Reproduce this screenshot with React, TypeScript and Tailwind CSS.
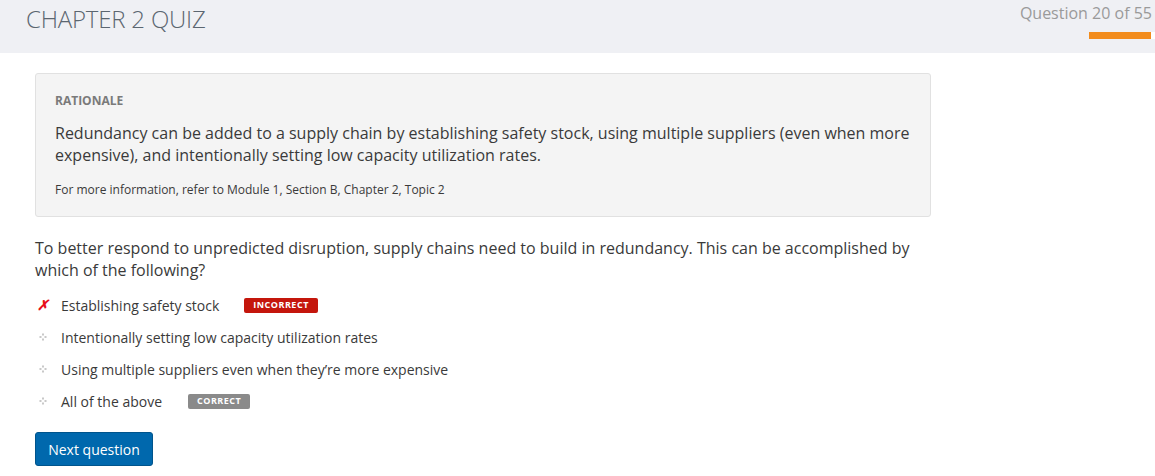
import React from 'react';

const OPTIONS = [
  { text: 'Establishing safety stock', status: 'incorrect' },
  { text: 'Intentionally setting low capacity utilization rates', status: 'none' },
  { text: 'Using multiple suppliers even when they\u2019re more expensive', status: 'none' },
  { text: 'All of the above', status: 'correct' },
];

const Bullet = () => (
  <svg width="8" height="8" viewBox="0 0 8 8" className="text-[#c8c8c8]">
    <rect x="3" y="0.5" width="2" height="2" fill="currentColor" />
    <rect x="0.5" y="3" width="2" height="2" fill="currentColor" />
    <rect x="5.5" y="3" width="2" height="2" fill="currentColor" />
    <rect x="3" y="5.5" width="2" height="2" fill="currentColor" />
  </svg>
);

export default function App() {
  return (
    <div className="w-[1155px] h-[476px] bg-white font-['Open_Sans',sans-serif] overflow-hidden">
      {/* Header */}
      <div className="h-[53px] bg-[#eff0f4] flex justify-between">
        <h1 className="pl-[26px] pt-[2px] text-[24px] font-light text-[#5b6670] leading-[34px] tracking-[-0.2px]">
          CHAPTER 2 QUIZ
        </h1>
        <div className="flex flex-col items-end">
          <div className="pt-[2px] pr-[3px] text-[16px] text-[#9a9a9a] leading-[22px]">Question 20 of 55</div>
          <div className="mt-[8px] w-[66px] h-[7px] bg-white flex">
            <div className="w-[62px] h-full bg-[#f28c1c]" />
          </div>
        </div>
      </div>

      <div className="pl-[35px] pt-[20px] w-[931px]">
        {/* Rationale */}
        <div className="bg-[#f4f4f4] border border-[#e1e1e1] rounded-[3px] px-[19px] pt-[19px] pb-[18px]">
          <div className="text-[12px] font-bold text-[#7a7a7a] leading-[16px]">RATIONALE</div>
          <p className="mt-[13px] text-[16px] text-[#3a3a3a] leading-[22px]">
            Redundancy can be added to a supply chain by establishing safety stock, using multiple suppliers (even when more
            expensive), and intentionally setting low capacity utilization rates.
          </p>
          <p className="mt-[16px] text-[12px] text-[#3a3a3a] leading-[16px]">
            For more information, refer to Module 1, Section B, Chapter 2, Topic 2
          </p>
        </div>

        {/* Question */}
        <p className="mt-[20px] text-[16px] text-[#3a3a3a] leading-[22px]">
          To better respond to unpredicted disruption, supply chains need to build in redundancy. This can be accomplished by
          which of the following?
        </p>

        <ul className="mt-[8px] flex flex-col">
          {OPTIONS.map(opt => (
            <li key={opt.text} className="h-[32px] flex items-center text-[14px] text-[#3a3a3a]">
              <span className="w-[26px] flex justify-start pl-[4px]">
                {opt.status === 'incorrect' ? (
                  <span className="text-[#e8101a] text-[14px] font-bold italic leading-none -ml-[2px]">✗</span>
                ) : (
                  <Bullet />
                )}
              </span>
              <span>{opt.text}</span>
              {opt.status === 'incorrect' && (
                <span className="ml-[25px] h-[15px] px-[9px] rounded-[2px] bg-[#c4160c] text-white text-[9px] font-bold tracking-[0.5px] flex items-center">
                  INCORRECT
                </span>
              )}
              {opt.status === 'correct' && (
                <span className="ml-[26px] h-[15px] px-[9px] rounded-[2px] bg-[#8a8a8a] text-white text-[9px] font-bold tracking-[0.5px] flex items-center">
                  CORRECT
                </span>
              )}
            </li>
          ))}
        </ul>

        <button className="mt-[15px] h-[34px] w-[118px] rounded-[3px] bg-[#0068ad] border border-[#00548c] text-white text-[14px]">
          Next question
        </button>
      </div>
    </div>
  );
}
